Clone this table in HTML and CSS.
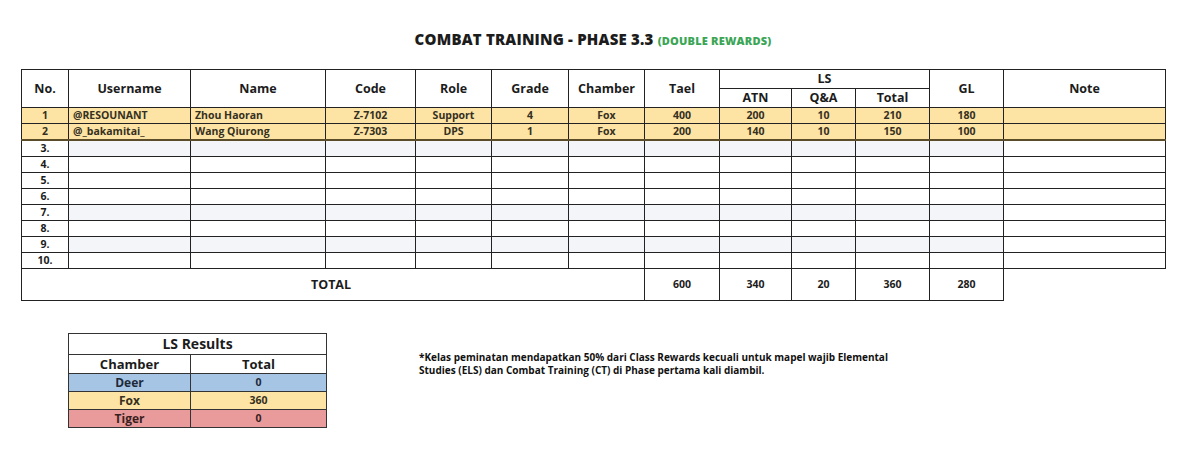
FILE: index.html
```html
<!DOCTYPE html>
<html>
<head>
  <meta charset="UTF-8">
  <title>Combat Training - Phase 3.3</title>
  <link rel="stylesheet" href="styles.css">
</head>
<body>
  <h3 class="title">COMBAT TRAINING - PHASE 3.3 <span class="bonus">(DOUBLE REWARDS)</span></h3>

  <table class="roster">
    <colgroup>
      <col class="c-no"><col class="c-user"><col class="c-name"><col class="c-code">
      <col class="c-role"><col class="c-grade"><col class="c-chamber"><col class="c-tael">
      <col class="c-atn"><col class="c-qa"><col class="c-total"><col class="c-gl"><col class="c-note">
    </colgroup>
    <thead>
      <tr class="head-top">
        <th rowspan="2">No.</th>
        <th rowspan="2">Username</th>
        <th rowspan="2">Name</th>
        <th rowspan="2">Code</th>
        <th rowspan="2">Role</th>
        <th rowspan="2">Grade</th>
        <th rowspan="2">Chamber</th>
        <th rowspan="2">Tael</th>
        <th colspan="3">LS</th>
        <th rowspan="2">GL</th>
        <th rowspan="2">Note</th>
      </tr>
      <tr class="head-sub">
        <th>ATN</th>
        <th>Q&amp;A</th>
        <th>Total</th>
      </tr>
    </thead>
    <tbody>
      <tr class="filled">
        <td>1</td><td class="left">@RESOUNANT</td><td class="left">Zhou Haoran</td><td>Z-7102</td>
        <td>Support</td><td>4</td><td>Fox</td><td>400</td><td>200</td><td>10</td><td>210</td><td>180</td><td></td>
      </tr>
      <tr class="filled last-filled">
        <td>2</td><td class="left">@_bakamitai_</td><td class="left">Wang Qiurong</td><td>Z-7303</td>
        <td>DPS</td><td>1</td><td>Fox</td><td>200</td><td>140</td><td>10</td><td>150</td><td>100</td><td></td>
      </tr>
      <tr class="band"><td>3.</td><td></td><td></td><td></td><td></td><td></td><td></td><td></td><td></td><td></td><td></td><td></td><td></td></tr>
      <tr><td>4.</td><td></td><td></td><td></td><td></td><td></td><td></td><td></td><td></td><td></td><td></td><td></td><td></td></tr>
      <tr><td>5.</td><td></td><td></td><td></td><td></td><td></td><td></td><td></td><td></td><td></td><td></td><td></td><td></td></tr>
      <tr><td>6.</td><td></td><td></td><td></td><td></td><td></td><td></td><td></td><td></td><td></td><td></td><td></td><td></td></tr>
      <tr class="band"><td>7.</td><td></td><td></td><td></td><td></td><td></td><td></td><td></td><td></td><td></td><td></td><td></td><td></td></tr>
      <tr><td>8.</td><td></td><td></td><td></td><td></td><td></td><td></td><td></td><td></td><td></td><td></td><td></td><td></td></tr>
      <tr class="band"><td>9.</td><td></td><td></td><td></td><td></td><td></td><td></td><td></td><td></td><td></td><td></td><td></td><td></td></tr>
      <tr><td>10.</td><td></td><td></td><td></td><td></td><td></td><td></td><td></td><td></td><td></td><td></td><td></td><td></td></tr>
      <tr class="total-row">
        <td colspan="7" class="total-label">TOTAL</td>
        <td>600</td><td>340</td><td>20</td><td>360</td><td>280</td><td class="empty"></td>
      </tr>
    </tbody>
  </table>

  <div class="bottom">
    <table class="results">
      <colgroup><col class="r-chamber"><col class="r-total"></colgroup>
      <tr><th colspan="2" class="results-title">LS Results</th></tr>
      <tr><th>Chamber</th><th>Total</th></tr>
      <tr class="deer"><td class="big">Deer</td><td>0</td></tr>
      <tr class="fox"><td class="big">Fox</td><td>360</td></tr>
      <tr class="tiger"><td class="big">Tiger</td><td>0</td></tr>
    </table>

    <p class="footnote">*Kelas peminatan mendapatkan 50% dari Class Rewards kecuali untuk mapel wajib Elemental<br>
      Studies (ELS) dan Combat Training (CT) di Phase pertama kali diambil.</p>
  </div>
</body>
</html>
```

FILE: styles.css
```css
body {
  font-family: 'Open Sans', 'DejaVu Sans', sans-serif;
  font-weight: 700;
  margin: 0;
  padding: 30px 0 0 21px;
  background-color: #fff;
  color: #1c1c1c;
}
.title {
  margin: 0 0 19px;
  font-size: 15px;
  line-height: 18px;
  text-align: center;
  width: 1144px;
  font-weight: 800;
  letter-spacing: 0.2px;
}
.bonus {
  font-size: 11px;
  color: #3aa655;
}
table {
  border-collapse: collapse;
  table-layout: fixed;
}
.roster {
  width: 1144px;
}
.c-no { width: 47px; }
.c-user { width: 122px; }
.c-name { width: 135px; }
.c-code { width: 90px; }
.c-role { width: 76px; }
.c-grade { width: 77px; }
.c-chamber { width: 76px; }
.c-tael { width: 75px; }
.c-atn { width: 72px; }
.c-qa { width: 64px; }
.c-total { width: 74px; }
.c-gl { width: 74px; }
.c-note { width: 162px; }
th, td {
  border: 1px solid #222;
  padding: 0 4px;
  text-align: center;
  white-space: nowrap;
  overflow: hidden;
}
.roster th {
  font-size: 12.5px;
  height: 18px;
  line-height: 18px;
}
.roster td {
  font-size: 10.5px;
  height: 15px;
  line-height: 15px;
}
.roster td.left {
  text-align: left;
}
.filled td {
  background-color: #fde4a4;
  color: #35301f;
}
.last-filled td {
  border-bottom: 2px solid #5b4d2a;
}
.band td {
  background-color: #f4f5f8;
}
.band td:first-child,
.band td:last-child {
  background-color: #fff;
}
.total-row td {
  height: 31px;
  line-height: 31px;
  font-size: 10.5px;
}
.total-row .total-label {
  font-size: 12.5px;
  padding-right: 8px;
}
.total-row .empty {
  border: none;
  border-top: 1px solid #222;
}
.bottom {
  display: flex;
  align-items: flex-start;
  gap: 92px;
  margin: 32px 0 0 47px;
}
.results {
  width: 258px;
}
.r-chamber { width: 122px; }
.r-total { width: 136px; }
.results th, .results td {
  border-color: #333;
}
.results th {
  font-size: 13px;
  height: 18px;
  line-height: 18px;
}
.results .results-title {
  font-size: 14px;
  height: 20px;
  line-height: 20px;
}
.results td {
  font-size: 10.5px;
  height: 17px;
  line-height: 17px;
}
.results td.big {
  font-size: 12px;
}
.deer td { background-color: #a6c4e4; color: #1d2a3a; }
.fox td { background-color: #fde4a4; color: #35301f; }
.tiger td { background-color: #e99b9b; color: #3a1f1f; }
.footnote {
  margin: 18px 0 0;
  font-size: 10px;
  line-height: 13px;
  color: #111;
}
```
